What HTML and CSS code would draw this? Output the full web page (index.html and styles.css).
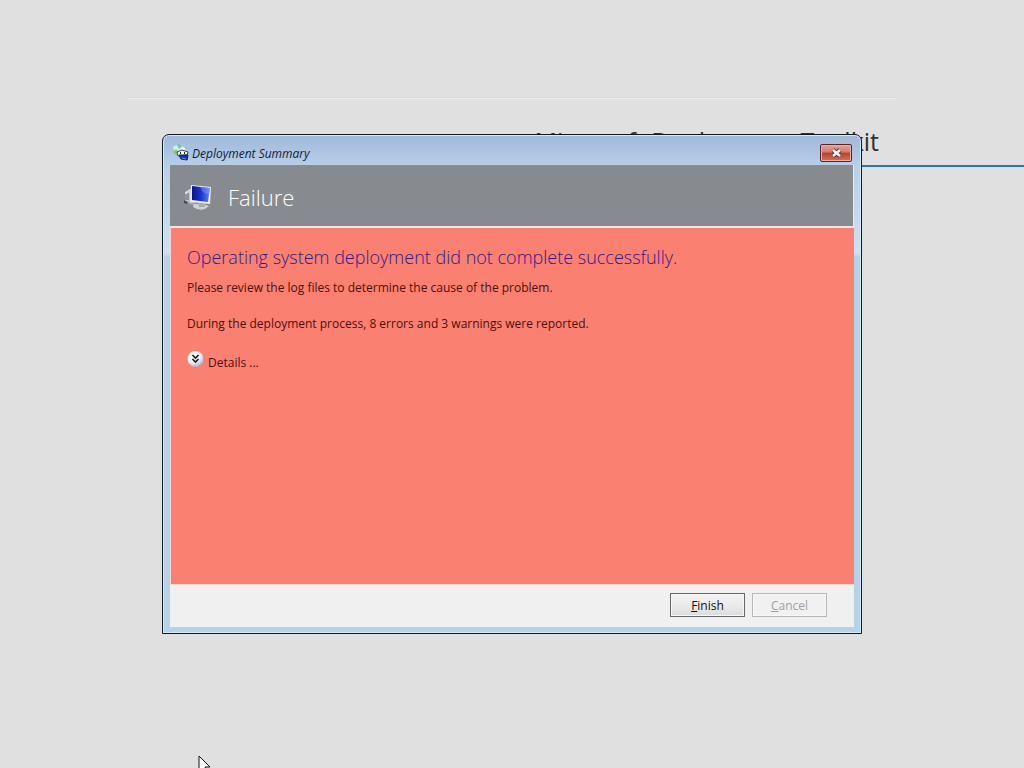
FILE: index.html
```html
<!DOCTYPE html>
<html lang="en">
<head>
  <meta charset="UTF-8" />
  <title>Deployment Summary</title>
  <link rel="stylesheet" href="styles.css">
</head>
<body>
  <div class="desktop">
    <hr class="top-rule">
    <header class="brand">Microsoft Deployment Toolkit</header>
    <hr class="brand-rule">
  </div>

  <main class="overlay">
    <section class="window" aria-labelledby="window-title">
      <div class="titlebar">
        <svg class="title-icon" width="18" height="18" viewBox="0 0 18 18">
          <path d="M1 3L5 1L10 2L13 5L8 11L3 9Z" fill="#d9efe6"/>
          <path d="M5 1L8 0L10 3L7 5Z" fill="#6fc6ad"/>
          <path d="M1 8L4 5L7 8L4 11Z" fill="#7fcb70"/>
          <path d="M8 4L12 3L14 6L10 7Z" fill="#e8f4f8"/>
          <path d="M5 8L10 6L16 8L15 11L6 12Z" fill="#f2f2e5" stroke="#344b56"/>
          <path d="M8 9H9M12 9H13" stroke="#182939" stroke-width="2"/>
          <path d="M7 11H16L15 16L9 15Z" fill="#172fc0" stroke="#10204e"/>
          <path d="M10 14L14 15" stroke="#6d8cf1"/>
        </svg>
        <span class="title-text" id="window-title">Deployment Summary</span>
        <button class="close" type="button" aria-label="Close">
          <svg width="13" height="11" viewBox="0 0 13 11">
            <path d="M3 2L10 8M10 2L3 8" stroke="#5b2c35" stroke-width="4.4"/>
            <path d="M3 2L10 8M10 2L3 8" stroke="#fff" stroke-width="2.6"/>
          </svg>
        </button>
      </div>

      <div class="banner">
        <svg class="banner-icon" width="30" height="28" viewBox="0 0 30 28">
          <defs>
            <linearGradient id="screen">
              <stop offset="0" stop-color="#0a1590"/>
              <stop offset="0.5" stop-color="#1a35cf"/>
              <stop offset="1" stop-color="#5f86f0"/>
            </linearGradient>
            <linearGradient id="metal" x1="0" y1="0" x2="1" y2="1">
              <stop offset="0" stop-color="#e4e6e8"/>
              <stop offset="1" stop-color="#9b9fa2"/>
            </linearGradient>
          </defs>
          <path d="M2 9L7 6L12 9V23L5 20L2 19Z" fill="url(#metal)"/>
          <path d="M3 11V17M5 10V17" stroke="#54595d"/>
          <path d="M1 17L5 19L4 21L1 20Z" fill="#4a4e51"/>
          <path d="M11 21L20 21L26 23L22 26Q16 28 10 24Z" fill="#d0d2d3"/>
          <path d="M15 19L22 20V24L16 24Z" fill="#a9acae"/>
          <path d="M8 2L28 4L27 21L7 19Z" fill="#e9edf5"/>
          <path d="M9 3L27 5L25 19L9 17Z" fill="url(#screen)"/>
          <path d="M17 4L27 5L26 12Q19 10 17 4Z" fill="#89a6f5" opacity="0.4"/>
        </svg>
        <h1>Failure</h1>
      </div>

      <div class="content">
        <h2>Operating system deployment did not complete successfully.</h2>
        <p>Please review the log files to determine the cause of the problem.</p>
        <p>During the deployment process, 8 errors and 3 warnings were reported.</p>
        <button class="details" type="button">
          <svg width="17" height="17" viewBox="0 0 17 17">
            <defs>
              <radialGradient id="knob" cx="0.4" cy="0.3" r="0.7">
                <stop offset="0" stop-color="#fff"/>
                <stop offset="0.65" stop-color="#e8edf0"/>
                <stop offset="1" stop-color="#aab5c1"/>
              </radialGradient>
            </defs>
            <circle cx="8.5" cy="8" r="8" fill="url(#knob)"/>
            <path d="M5.5 4L8.5 7L11.5 4M5.5 8L8.5 11L11.5 8" fill="none" stroke="#161a20" stroke-width="1.6"/>
          </svg>
          <span>Details ...</span>
        </button>
      </div>

      <div class="actions">
        <button class="btn" type="button"><span><u>F</u>inish</span></button>
        <button class="btn" type="button" disabled><span><u>C</u>ancel</span></button>
      </div>
    </section>
  </main>

  <svg class="cursor" width="14" height="21" viewBox="0 0 14 21">
    <path d="M2 1V17L6 13L9 20L11 19L8 12H13Z" fill="#fff" stroke="#111"/>
  </svg>
</body>
</html>
```

FILE: styles.css
```css
* {
  box-sizing: border-box;
}

body {
  min-height: 100vh;
  margin: 0;
  overflow: hidden;
  background-color: #e0e0e0;
  font-family: "Open Sans", "Noto Sans", sans-serif;
  font-size: 12px;
  color: #111;
}

.desktop {
  padding-top: 97px;
}

.top-rule {
  width: 75%;
  height: 2px;
  margin: 0 auto;
  border: 0;
  border-top: 1px solid #d9dacf;
  background: #ececec;
}

.brand {
  padding-top: 24px;
  padding-right: 145px;
  font-size: 25px;
  line-height: 36px;
  text-align: right;
  color: #303030;
}

.brand-rule {
  width: 50%;
  height: 2px;
  margin: 6px 0 0 auto;
  border: 0;
  background: #2476b8;
}

.overlay {
  position: absolute;
  inset: 0;
  display: flex;
  align-items: center;
  justify-content: center;
}

.window {
  display: flex;
  flex-direction: column;
  width: 100%;
  max-width: 700px;
  min-height: 500px;
  padding: 0 7px 6px;
  border: 1px solid #101820;
  border-radius: 7px 7px 0 0;
  background: linear-gradient(#a0b8da, #b8d0e8 32px, #cfe0f2 118px, #b5d3e8 122px);
  box-shadow: inset 0 0 0 1px #d3ebf8;
}

.titlebar {
  display: flex;
  align-items: center;
  height: 30px;
  padding: 6px 2px 0;
}

.title-text {
  margin-left: 2px;
  font-size: 12px;
  font-style: italic;
  color: #10203a;
}

.close {
  display: flex;
  align-items: center;
  justify-content: center;
  width: 32px;
  height: 18px;
  margin-left: auto;
  padding: 0;
  border: 1px solid #54232b;
  border-radius: 2px;
  background: linear-gradient(#e7a092, #d6786a 45%, #b9402c 50%, #d87059);
  box-shadow: inset 0 0 0 1px #eab0a5;
}

.banner {
  display: flex;
  align-items: center;
  height: 61px;
  padding: 3px 13px 0;
  border-right: 1px solid #e5edf4;
  background: #878b90;
}

.banner h1 {
  margin: 0 0 0 15px;
  font-size: 22px;
  font-weight: 300;
  line-height: 32px;
  color: #fff;
}

.content {
  flex: 1;
  padding: 16px;
  border-top: 2px solid #f8e9e9;
  border-left: 1px solid #f0d5dc;
  background: #fa8072;
}

.content h2 {
  margin: 0 0 9px;
  font-size: 18px;
  font-weight: 300;
  line-height: 26px;
  color: #371a80;
}

.content p {
  margin: 0 0 18px;
  line-height: 18px;
  color: #4a100c;
}

.details {
  display: flex;
  gap: 4px;
  padding: 0;
  border: 0;
  background: none;
  font: inherit;
  line-height: 24px;
  color: #4a100c;
}

.actions {
  display: flex;
  justify-content: flex-end;
  gap: 7px;
  padding: 8px 27px 10px;
  border-top: 1px solid #faddd0;
  background: #f0f0f0;
}

.btn {
  width: 75px;
  height: 24px;
  padding: 0;
  border: 1px solid #65676a;
  background: linear-gradient(#f2f2f2, #ebebeb 50%, #dcdcdc);
  box-shadow: inset 0 0 0 1px #f7f7f7;
  font: inherit;
  color: #111;
}

.btn:disabled {
  border-color: #b5b7b8;
  background: #f1f1f1;
  color: #a0a0a0;
}

.cursor {
  position: absolute;
  top: 755px;
  left: 197px;
}
```
